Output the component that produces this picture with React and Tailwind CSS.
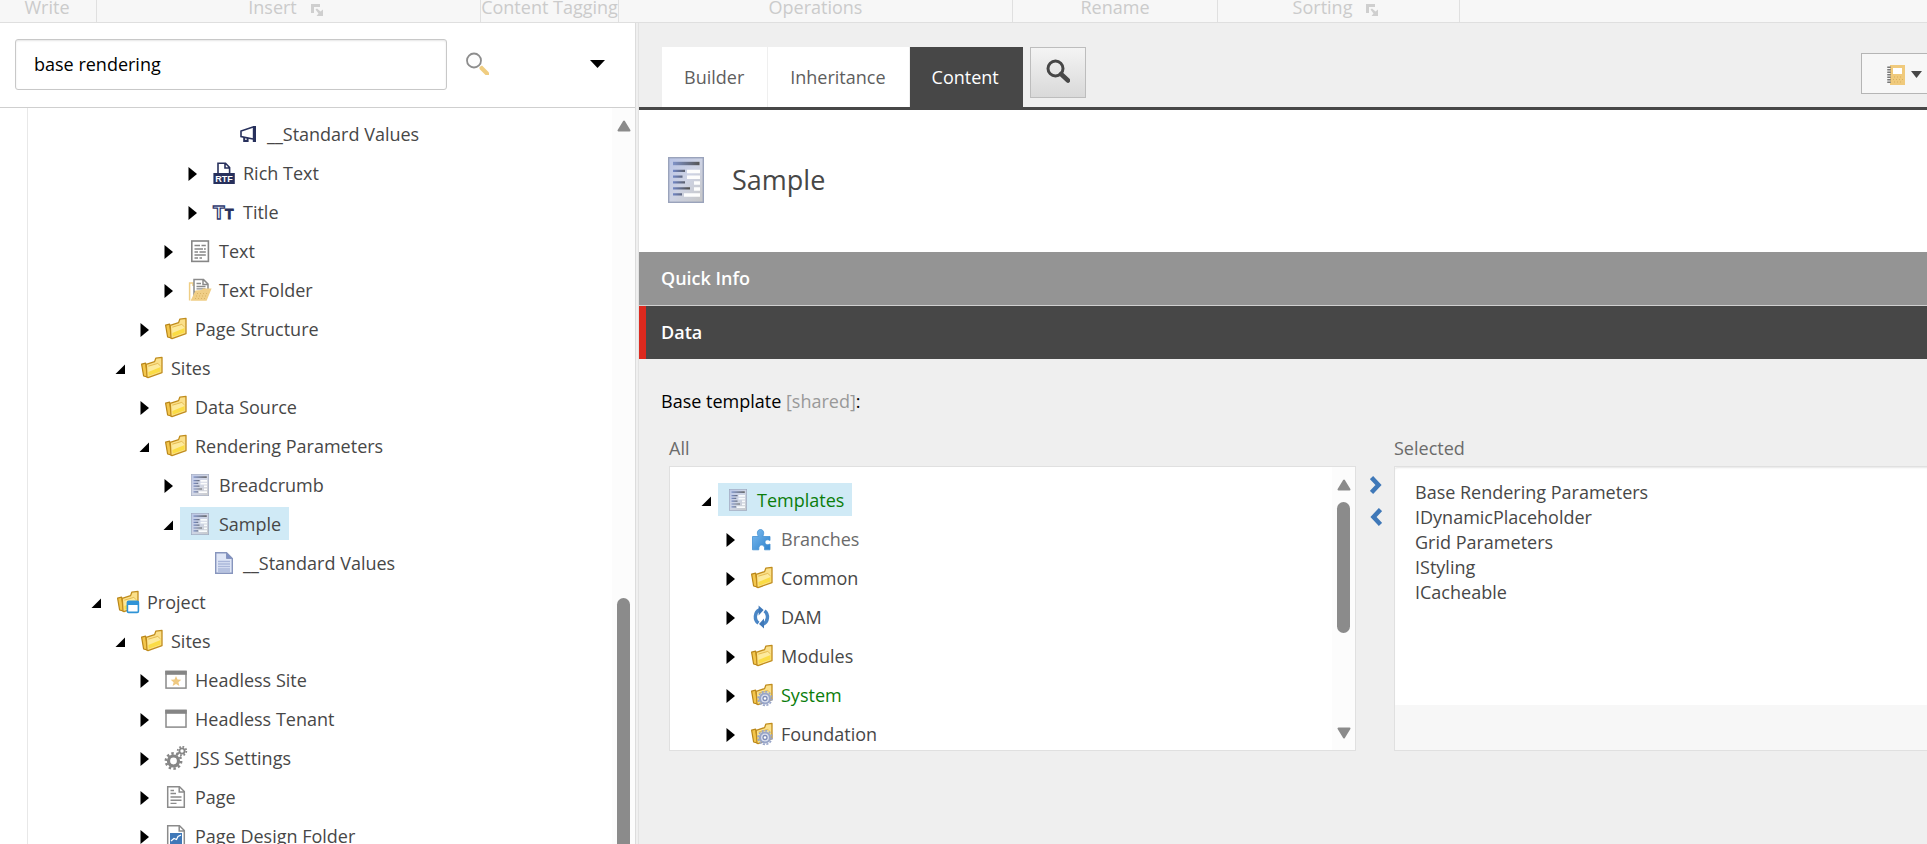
import React, { useState } from "react";

const ribbonGroups = [
  { name: "Write", width: "w-[97px]", pad: "pr-0.5" },
  { name: "Insert", width: "w-[384px]", pad: "pr-1.5", launcher: true },
  { name: "Content Tagging", width: "w-[138px]", pad: "" },
  { name: "Operations", width: "w-[394px]", pad: "" },
  { name: "Rename", width: "w-[205px]", pad: "" },
  { name: "Sorting", width: "w-[242px]", pad: "pr-1.5", launcher: true },
];

const contentTree = [
  { name: "__Standard Values", icon: "megaphone", level: 5, state: "leaf" },
  { name: "Rich Text", icon: "rtf", level: 4, state: "closed" },
  { name: "Title", icon: "title", level: 4, state: "closed" },
  { name: "Text", icon: "text", level: 3, state: "closed" },
  { name: "Text Folder", icon: "textFolder", level: 3, state: "closed" },
  { name: "Page Structure", icon: "folder", level: 2, state: "closed" },
  { name: "Sites", icon: "folder", level: 1, state: "open" },
  { name: "Data Source", icon: "folder", level: 2, state: "closed" },
  { name: "Rendering Parameters", icon: "folder", level: 2, state: "open" },
  { name: "Breadcrumb", icon: "template", level: 3, state: "closed" },
  { name: "Sample", icon: "template", level: 3, state: "open", selected: true },
  { name: "__Standard Values", icon: "document", level: 4, state: "leaf" },
  { name: "Project", icon: "project", level: 0, state: "open" },
  { name: "Sites", icon: "folder", level: 1, state: "open" },
  { name: "Headless Site", icon: "site", level: 2, state: "closed" },
  { name: "Headless Tenant", icon: "window", level: 2, state: "closed" },
  { name: "JSS Settings", icon: "gears", level: 2, state: "closed" },
  { name: "Page", icon: "page", level: 2, state: "closed" },
  { name: "Page Design Folder", icon: "pageDesign", level: 2, state: "closed" },
];

const templateTree = [
  { name: "Templates", icon: "template", level: 0, state: "open", selected: true, color: "text-[#0b7d0b]" },
  { name: "Branches", icon: "puzzle", level: 1, state: "closed", color: "text-[#6b6b6b]" },
  { name: "Common", icon: "folder", level: 1, state: "closed" },
  { name: "DAM", icon: "sync", level: 1, state: "closed" },
  { name: "Modules", icon: "folder", level: 1, state: "closed" },
  { name: "System", icon: "systemFolder", level: 1, state: "closed", color: "text-[#0b7d0b]" },
  { name: "Foundation", icon: "systemFolder", level: 1, state: "closed" },
];

const selectedTemplates = [
  "Base Rendering Parameters",
  "IDynamicPlaceholder",
  "Grid Parameters",
  "IStyling",
  "ICacheable",
];

const levelPadding = ["pl-0", "pl-6", "pl-12", "pl-18", "pl-24", "pl-30"];

// ---------- Icons ----------

const FolderShape = () => (
  <>
    <path d="M1.6 8.2 5.6 7.2 8 21.2 3.6 20Z" fill="#f3c64d" stroke="#b98618" strokeWidth="1.2" strokeLinejoin="round" />
    <path
      d="M7 21.2 6.2 8.4 14.6 5.6 15.8 2.2 22 1.4V16.6L8 21.6Z"
      fill="#fbe08a"
      stroke="#c08c1c"
      strokeWidth="1.3"
      strokeLinejoin="round"
    />
    <path d="M8.2 10.2 18.6 7 20.6 9V15.6L8.6 19.8Z" fill="#fdea9c" />
    <path d="M8.4 16 20.6 11V15.6L8.6 19.8Z" fill="#fbdc45" />
    <path d="M8.4 10.2 17.8 7.4 20.6 10" fill="none" stroke="#e2b548" strokeWidth="0.9" />
  </>
);

const PageOutline = () => (
  <path d="M3.7 1.7H15.5L20.3 6.5V22.3H3.7ZM15.2 1.7V7H20.3" fill="#fff" stroke="#8b8b8b" strokeWidth="1.5" />
);

const TemplateShape = () => (
  <>
    <rect x="0.7" y="0.7" width="34.6" height="44.6" fill="url(#templateFill)" stroke="#9aa3bb" strokeWidth="1.4" />
    <rect x="5" y="4.8" width="26.5" height="3.4" fill="url(#templateHead)" />
    <path d="M5 13.8H17M5 19.6H14.5M5 25.4H17M5 31.4H22M5 37.4H14" stroke="url(#templateLine)" strokeWidth="2.2" />
    <path d="M19 14.5H32M19 20.3H32M26 26H32M26 32H32M16 38H32" stroke="#fdfdfd" strokeWidth="3.6" />
  </>
);

const icons = {
  folder: <FolderShape />,
  megaphone: (
    <g stroke="#27305c" fill="none" strokeWidth="1.6">
      <path d="M17 5 5 9V14.5L17 17" />
      <path d="M18.4 4V20" strokeWidth="3.2" />
      <path d="M8.2 15V19H11.6V16" strokeWidth="2" />
    </g>
  ),
  rtf: (
    <g>
      <path d="M6 13V2.2H13.5L17.6 6.5V13M13 2.2V7H17.6" fill="#fff" stroke="#27305c" strokeWidth="1.6" />
      <rect x="1.4" y="12" width="21.4" height="11" fill="#27305c" />
      <text x="12" y="21" textAnchor="middle" fontSize="9" fontWeight="700" fill="#fff" fontFamily="Liberation Sans, sans-serif">
        RTF
      </text>
    </g>
  ),
  title: (
    <g fontFamily="Liberation Sans, sans-serif" fontWeight="700">
      <text x="1" y="18.5" fontSize="19" fill="#fff" stroke="#2e3a70" strokeWidth="1.3">T</text>
      <text x="13" y="19" fontSize="14" fill="#27305c" stroke="#27305c" strokeWidth="0.8">T</text>
    </g>
  ),
  text: (
    <g stroke="#868686" fill="none" strokeWidth="1.5">
      <rect x="3.8" y="2" width="16.6" height="20.4" strokeWidth="1.6" />
      <path d="M6.5 6.5H12M13.5 6.5H17.8M6.5 10H15M16 10H17.8M6.5 13H10M11.5 13H17.8M6.5 16H17.8M6.5 19H10M11.5 19H14" />
    </g>
  ),
  textFolder: (
    <g>
      <path d="M1.6 22.5V5H5V8" fill="none" stroke="#efce85" strokeWidth="1.5" />
      <path d="M6 20V1.6H15.5L20 6V14H6ZM15 1.6V6.4H20" fill="#fff" stroke="#8b8b8b" strokeWidth="1.5" />
      <path d="M8.5 5.5H13M8.5 8.5H17.5M8.5 10.8H17.5" stroke="#8b8b8b" strokeWidth="1.3" />
      <path d="M7.5 12.5 13.5 12 15 10.5H23.6L18.6 22.8H2.6Z" fill="#f0ce86" />
      <path d="M9 15.5H20M8 18H19M7 20.5H18" stroke="#d9b364" strokeWidth="1" strokeDasharray="1 2" />
    </g>
  ),
  template: (
    <svg x="3" y="1" width="18" height="22" viewBox="0 0 36 46" preserveAspectRatio="none" opacity="0.9">
      <TemplateShape />
    </svg>
  ),
  document: (
    <g>
      <path d="M3.7 1.7H14.5L20.3 7.5V22.3H3.7Z" fill="#dfe6f6" stroke="#8795bd" strokeWidth="1.4" />
      <path d="M14.5 1.7V7.5H20.3Z" fill="#7f90c4" stroke="#8795bd" />
      <path d="M6 10.5H18M6 13H18M6 15.5H18M6 18H18M6 20H18" stroke="#a9b6d9" strokeWidth="1.4" />
    </g>
  ),
  project: (
    <g>
      <FolderShape />
      <rect x="11.4" y="11.4" width="11" height="11" rx="1.2" fill="#fff" stroke="#2f93d6" strokeWidth="1.6" />
      <path d="M11 11H22.8V15H11Z" fill="#2f93d6" />
    </g>
  ),
  site: (
    <g>
      <rect x="2" y="3.5" width="20" height="16.6" fill="#fff" stroke="#8b8b8b" strokeWidth="1.5" />
      <path d="M1.3 2.7H22.7V6.8H1.3Z" fill="#858585" />
      <path d="M12 8 13.5 11.6 17.3 11.8 14.4 14.3 15.4 18 12 16 8.6 18 9.6 14.3 6.7 11.8 10.5 11.6Z" fill="#efc981" />
    </g>
  ),
  window: (
    <g>
      <rect x="2" y="3.5" width="20" height="16.6" fill="#fff" stroke="#8b8b8b" strokeWidth="1.5" />
      <path d="M1.3 2.7H22.7V6.8H1.3Z" fill="#858585" />
    </g>
  ),
  gears: (
    <g fill="none" stroke="#868686">
      <circle cx="9.5" cy="15" r="5" strokeWidth="3.2" />
      <circle cx="9.5" cy="15" r="7.6" strokeWidth="2.6" strokeDasharray="2.4 2.37" />
      <circle cx="18" cy="5" r="2.6" strokeWidth="1.8" />
      <circle cx="18" cy="5" r="4.3" strokeWidth="1.8" strokeDasharray="1.7 1.67" />
    </g>
  ),
  page: (
    <g>
      <PageOutline />
      <path d="M6.5 5.5H10M6.5 8.5H12M6.5 12H17.5M6.5 15.2H17.5M6.5 18.4H12.5" stroke="#8b8b8b" strokeWidth="1.4" />
    </g>
  ),
  pageDesign: (
    <g>
      <PageOutline />
      <rect x="6" y="9" width="12" height="11" fill="#3f78b8" />
      <path d="M7 17 10 14.5 12.5 15.5 14 12.5 17 11" fill="none" stroke="#fff" strokeWidth="1.2" />
    </g>
  ),
  puzzle: (
    <path
      d="M2.5 9.5H8.5C6.6 7 7 2.5 10.5 2.5S14.4 7 12.7 9.5H20V13.5C17.5 12 15 13 15 15.2S17.5 18.4 20 17V22.8H14.5C15 19.5 13.5 18 11.7 18S8.4 19.5 8.8 22.8H2.5Z"
      fill="url(#puzzleFill)"
      stroke="#4391d3"
      strokeWidth="0.8"
    />
  ),
  sync: (
    <g fill="none" stroke="#4a86c5" strokeWidth="3.4">
      <path d="M9.5 4.8A6.8 7.6 0 0 0 8.5 18.2" />
      <path d="M13 19.2A6.8 7.6 0 0 0 14.500 5.8" />
      <path d="M8.6 0.600 13.6 5 8.6 10.500Z" fill="#3f78b8" stroke="none" />
      <path d="M14 13.500 9 19 14 23.400Z" fill="#3f78b8" stroke="none" />
    </g>
  ),
  systemFolder: (
    <g>
      <FolderShape />
      <circle cx="15" cy="15.5" r="5" fill="#dde2ef" stroke="#98a5c8" strokeWidth="2.2" />
      <circle cx="15" cy="15.5" r="6.9" fill="none" stroke="#98a5c8" strokeWidth="1.6" strokeDasharray="2.2 1.41" />
      <circle cx="15" cy="15.5" r="2" fill="#fff" stroke="#7c8bb5" strokeWidth="1.3" />
    </g>
  ),
};

// Gradients shared by the tree icons
const IconDefs = () => (
  <svg className="absolute h-0 w-0" aria-hidden="true">
    <defs>
      <linearGradient id="templateFill" x1="0" y1="0" x2="1" y2="1">
        <stop offset="0" stopColor="#b9c4e6" />
        <stop offset="0.5" stopColor="#ced3e4" />
        <stop offset="1" stopColor="#c6c6c6" />
      </linearGradient>
      <linearGradient id="templateHead">
        <stop offset="0" stopColor="#8093c8" />
        <stop offset="1" stopColor="#555" />
      </linearGradient>
      <linearGradient id="templateLine" gradientUnits="userSpaceOnUse" x1="5" y1="0" x2="20" y2="0">
        <stop offset="0" stopColor="#7186c4" />
        <stop offset="1" stopColor="#555" />
      </linearGradient>
      <linearGradient id="puzzleFill" x1="0" y1="0" x2="1" y2="1">
        <stop offset="0" stopColor="#7dbcf0" />
        <stop offset="1" stopColor="#2f82cc" />
      </linearGradient>
    </defs>
  </svg>
);

const LauncherIcon = () => (
  <svg viewBox="0 0 12 12" className="h-3 w-3" fill="#cfcfcf" aria-hidden="true">
    <path d="M0 0H9V3H3V9H0Z" />
    <path d="M4.5 5.5 6 4.5 9.5 7.5 12 5.5V12H5.5L7.5 9.5Z" />
  </svg>
);

// ---------- Tree ----------

const TreeNode = ({ node }) => (
  <li className={`flex h-[39px] items-center ${levelPadding[node.level]}`}>
    {node.state === "leaf" ? (
      <span className="h-6 w-6 shrink-0" />
    ) : (
      <button type="button" aria-label={`Toggle ${node.name}`} className="h-6 w-6 shrink-0">
        <svg viewBox="0 0 24 24" className="h-6 w-6">
          {node.state === "open" ? <path d="M17 8.5V18H7.5Z" /> : <path d="M8.5 6V20L17 13Z" />}
        </svg>
      </button>
    )}
    <a
      href="#"
      className={`flex h-[33px] items-center gap-[7px] px-2 whitespace-nowrap ${node.selected ? "bg-[#d0eaf6]" : ""} ${
        node.color || "text-[#474747]"
      }`}
    >
      <svg viewBox="0 0 24 24" className="h-6 w-6 shrink-0" aria-hidden="true">
        {icons[node.icon]}
      </svg>
      {node.name}
    </a>
  </li>
);

const ScrollArrow = ({ down }) => (
  <svg viewBox="0 0 14 12" className="h-3 w-3.5 shrink-0" fill="#8b8b8b" stroke="#8b8b8b" strokeWidth="2" strokeLinejoin="round">
    {down ? <path d="M1.5 1.5H12.5L7 10.5Z" /> : <path d="M1.5 10.5H12.5L7 1.5Z" />}
  </svg>
);

const App = () => {
  const [search, setSearch] = useState("base rendering");
  const [activeTab, setActiveTab] = useState("Content");

  return (
    <div className="flex h-screen flex-col overflow-hidden bg-[#efefef] font-['Open_Sans',sans-serif] text-[18px] leading-6 text-[#474747]">
      <IconDefs />

      {/* Ribbon group captions, scrolled partly out at the top */}
      <header className="flex h-[23px] shrink-0 border-b border-[#dfdfdf] bg-[#f7f7f7] text-[#cbcbcb]">
        {ribbonGroups.map((group) => (
          <div
            key={group.name}
            className={`flex shrink-0 items-start justify-center gap-3.5 border-r border-[#e0e0e0] whitespace-nowrap ${group.width} ${group.pad}`}
          >
            <span className="-mt-[5px]">{group.name}</span>
            {group.launcher && (
              <button type="button" aria-label={`${group.name} options`} className="pt-1">
                <LauncherIcon />
              </button>
            )}
          </div>
        ))}
      </header>

      <div className="flex min-h-0 flex-1">
        {/* Sidebar */}
        <aside className="flex w-[636px] shrink-0 flex-col border-r border-[#dcdcdc] bg-white">
          <form className="flex h-[85px] shrink-0 items-center border-b border-[#cfcfcf] pr-[30px] pb-0.5 pl-[15px]">
            <input
              type="text"
              aria-label="Search"
              value={search}
              onChange={(e) => setSearch(e.target.value)}
              className="h-[51px] w-[432px] rounded-[3px] border border-[#c8c8c8] bg-white px-[18px] text-black shadow-[inset_0_1px_2px_rgba(0,0,0,0.1)]"
            />
            <button type="button" aria-label="Run search" className="ml-[18px] p-px">
              <svg viewBox="0 0 24 24" className="h-6 w-6">
                <circle cx="8" cy="8.5" r="7" fill="#fdfdfd" stroke="#8d8d8d" strokeWidth="1.8" />
                <path d="M13.5 15 16 13.5 23 20.5V23H19.5L13.5 17Z" fill="#f0cd80" />
              </svg>
            </button>
            <button type="button" aria-label="Search options" className="ml-auto">
              <svg viewBox="0 0 15 8" className="h-2 w-[15px]">
                <path d="M0 0H15L7.5 8Z" />
              </svg>
            </button>
          </form>

          <div className="flex min-h-0 flex-1">
            <div className="w-[27px] shrink-0" />
            <ul className="flex-1 overflow-hidden border-l border-[#e8e8e8] pt-1.5 pl-14">
              {contentTree.map((node, index) => (
                <TreeNode key={index} node={node} />
              ))}
            </ul>
            <div className="flex w-[23px] shrink-0 flex-col items-center bg-[#fcfcfc] pt-3">
              <ScrollArrow />
              <div className="mt-[466px] w-[13px] flex-1 rounded-t-full bg-[#8b8b8b]" />
            </div>
          </div>
        </aside>
        <div className="w-[3px] shrink-0 border-r border-[#e2e2e2] bg-[#efefef]" />

        {/* Editor */}
        <main className="flex min-w-0 flex-1 flex-col">
          <div className="flex h-[87px] shrink-0 items-start border-b-3 border-[#474747] pt-6 pl-[23px]">
            <nav className="flex h-[60px]">
              {["Builder", "Inheritance", "Content"].map((tab) => (
                <button
                  key={tab}
                  type="button"
                  onClick={() => setActiveTab(tab)}
                  className={`border-r pr-[23px] pl-[22px] ${
                    activeTab === tab
                      ? "border-[#474747] bg-[#474747] text-white"
                      : "border-[#efefef] bg-white text-[#5e5e5e]"
                  }`}
                >
                  {tab}
                </button>
              ))}
            </nav>
            <button
              type="button"
              aria-label="Search"
              className="ml-[7px] flex h-[51px] w-14 items-center justify-center border border-[#bdbdbd] bg-linear-to-b from-[#f4f4f4] to-[#d9d9d9] pb-1"
            >
              <svg viewBox="0 0 24 24" className="h-6 w-6" fill="none" stroke="#474747">
                <circle cx="9.5" cy="9.5" r="7.5" strokeWidth="3" />
                <path d="M15 15 22 21.5" strokeWidth="4.5" strokeLinecap="round" />
              </svg>
            </button>
            <button
              type="button"
              aria-label="Notebook"
              className="mt-1.5 ml-auto flex h-[41px] w-[66px] items-center gap-[5px] border border-r-0 border-[#b5b5b5] bg-[#f7f7f7] pt-0.5 pl-[25px]"
            >
              <svg viewBox="0 0 19 20" className="h-5 w-[19px]">
                <path d="M3 0H18V20H3Z" fill="#f0ca7c" />
                <rect x="6" y="3" width="9" height="6" fill="#fff" />
                <path d="M2 1.5V19" stroke="#777" strokeWidth="3.5" strokeDasharray="1.5 1" />
                <path d="M7 12H16M6 14.5H16M7 17H16" stroke="#d7b060" strokeWidth="1" strokeDasharray="1 2" />
              </svg>
              <svg viewBox="0 0 11 7" className="h-[7px] w-[11px]" fill="#474747">
                <path d="M0 0H11L5.5 7Z" />
              </svg>
            </button>
          </div>

          <div className="flex h-[142px] shrink-0 items-center gap-7 bg-white pb-0.5 pl-[29px]">
            <svg viewBox="0 0 36 46" className="h-[46px] w-9" aria-hidden="true">
              <TemplateShape />
            </svg>
            <h1 className="text-[27px] leading-9">Sample</h1>
          </div>

          <h2 className="flex h-[54px] shrink-0 items-center border-b border-[#d0d0d0] bg-[#949494] pb-0.5 pl-[22px] font-semibold text-white">
            Quick Info
          </h2>
          <h2 className="flex h-[53px] shrink-0 items-center border-l-[7px] border-[#dc291e] bg-[#474747] pb-0.5 pl-[15px] font-semibold text-white">
            Data
          </h2>

          <section className="pt-[30px] pl-[22px]">
            <p className="text-black">
              Base template <span className="text-[#999]">[shared]</span>:
            </p>

            <div className="grid grid-cols-[687fr_38px_533fr] pt-[23px] pl-2 text-[#6b6b6b]">
              <div className="min-w-0">
                <p className="pb-1.5">All</p>
                <div className="flex h-[285px] border border-[#e0e0e0] bg-white">
                  <ul className="flex-1 overflow-hidden pt-[13px] pl-6">
                    {templateTree.map((node) => (
                      <TreeNode key={node.name} node={node} />
                    ))}
                  </ul>
                  <div className="flex w-[23px] shrink-0 flex-col items-center bg-[#fcfcfc] pt-3 pb-[11px]">
                    <ScrollArrow />
                    <div className="mt-[11px] mb-auto h-[131px] w-[13px] rounded-full bg-[#8b8b8b]" />
                    <ScrollArrow down />
                  </div>
                </div>
              </div>

              <div className="flex flex-col items-center gap-3 pt-[39px] pl-0.5">
                <button type="button" aria-label="Add">
                  <svg viewBox="0 0 12 20" className="h-5 w-3" fill="none" stroke="#3f78b8" strokeWidth="4.5">
                    <path d="M1.5 2.5 8.5 10 1.5 17.5" />
                  </svg>
                </button>
                <button type="button" aria-label="Remove">
                  <svg viewBox="0 0 12 20" className="h-5 w-3" fill="none" stroke="#3f78b8" strokeWidth="4.5">
                    <path d="M10.5 2.5 3.5 10 10.5 17.5" />
                  </svg>
                </button>
              </div>

              <div className="min-w-0">
                <label htmlFor="selected-templates" className="block pb-1.5">
                  Selected
                </label>
                <div className="h-[285px] border border-r-0 border-[#e0e0e0] bg-[#f7f7f7]">
                  <select
                    id="selected-templates"
                    multiple
                    className="block h-[238px] w-full overflow-hidden rounded-tl-[3px] bg-white px-5 py-[13px] text-[#474747] shadow-[inset_0_2px_2px_-1px_rgba(0,0,0,0.1)]"
                  >
                    {selectedTemplates.map((name) => (
                      <option key={name} className="h-[25px]">
                        {name}
                      </option>
                    ))}
                  </select>
                </div>
              </div>
            </div>
          </section>
        </main>
      </div>
    </div>
  );
};

export default App;
